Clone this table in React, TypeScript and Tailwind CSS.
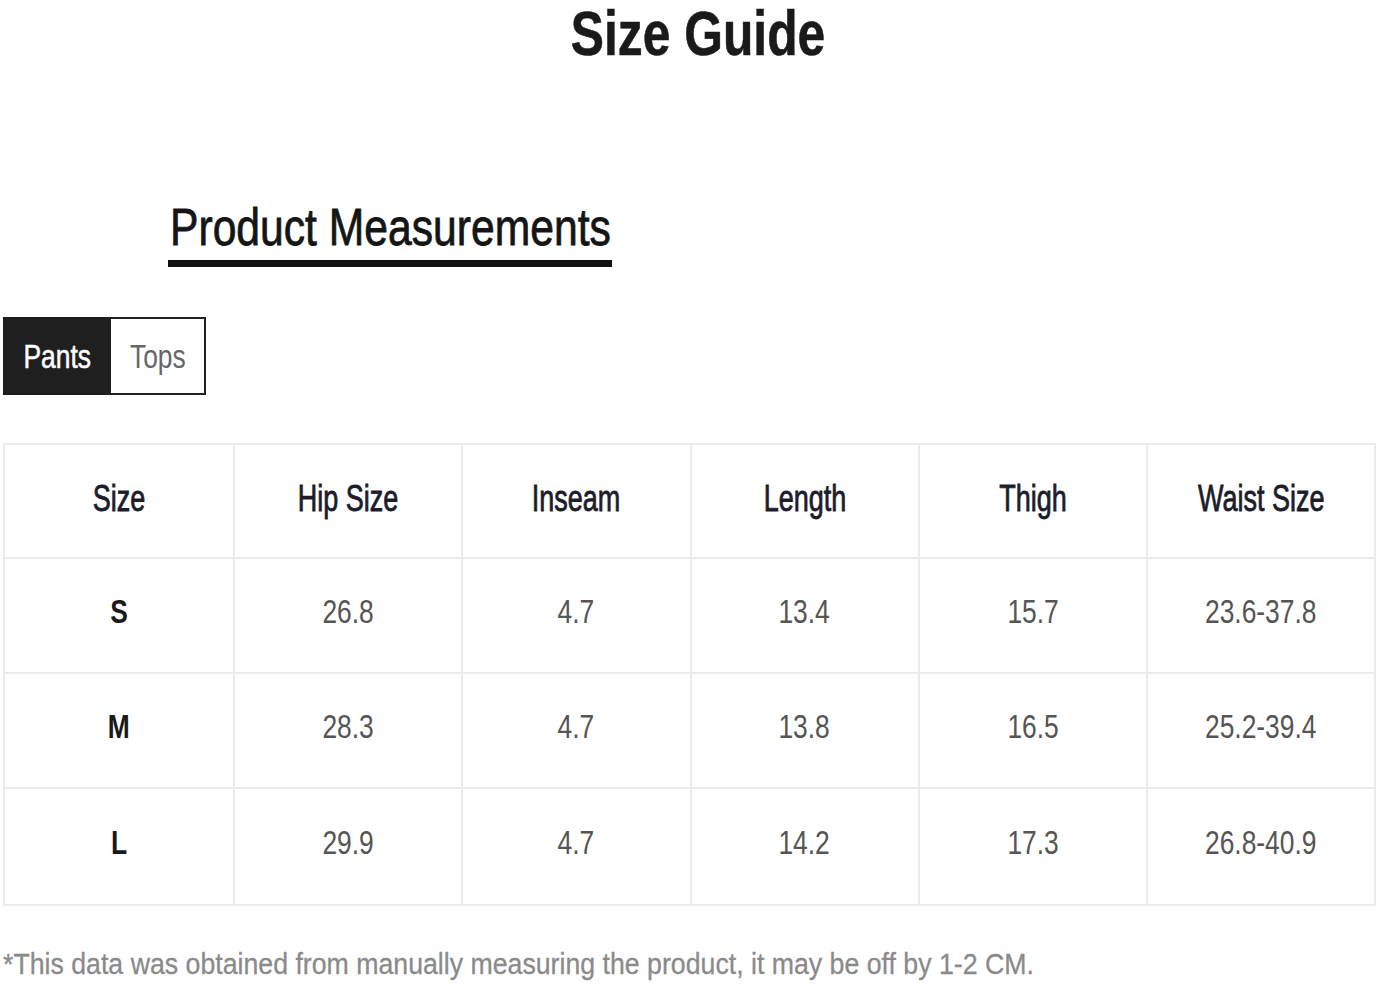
const sizes = [
  { size: "S", hip: "26.8", inseam: "4.7", length: "13.4", thigh: "15.7", waist: "23.6-37.8" },
  { size: "M", hip: "28.3", inseam: "4.7", length: "13.8", thigh: "16.5", waist: "25.2-39.4" },
  { size: "L", hip: "29.9", inseam: "4.7", length: "14.2", thigh: "17.3", waist: "26.8-40.9" },
];

const headers = ["Size", "Hip Size", "Inseam", "Length", "Thigh", "Waist Size"];

export default function App() {
  return (
    <main className="min-h-screen bg-white font-['Liberation_Sans',Arial,sans-serif]">
      {/* title */}
      <h1 className="pt-[2px] pl-[18px] text-center text-[63px] leading-none font-bold text-[#1a1a1a] [-webkit-text-stroke:0.6px_#1a1a1a]">
        <span className="inline-block scale-x-[0.79]">Size Guide</span>
      </h1>

      <div className="mt-[136px] ml-[168px]">
        <h2 className="h-[52px] text-[52px] leading-none whitespace-nowrap text-[#151515] [-webkit-text-stroke:0.8px_#151515]">
          <span className="ml-[2px] inline-block origin-left scale-x-[0.82]">Product Measurements</span>
        </h2>
        <div className="mt-[7px] h-[7px] w-[444px] bg-[#111]" />
      </div>

      {/* tabs */}
      <div className="mt-[50px] ml-[3px] flex h-[78px] w-[203px]">
        <button className="flex w-[108px] items-center justify-center bg-[#1f1f1f] text-[33px] leading-none text-white">
          <span className="inline-block scale-x-[0.8] [-webkit-text-stroke:0.5px_white]">Pants</span>
        </button>
        <button className="flex flex-1 items-center justify-center border-2 border-l-0 border-[#1f1f1f] bg-white text-[33px] leading-none text-[#666]">
          <span className="inline-block scale-x-[0.8]">Tops</span>
        </button>
      </div>

      {/* table */}
      <div className="mx-[3px] mt-[48px] border-2 border-[#ebebeb]">
        <div className="grid grid-cols-6">
          {headers.map((h, i) => (
            <div
              key={h}
              className={`flex h-[114px] items-center justify-center border-b-2 border-[#ebebeb] text-[36px] leading-none text-[#1c1c2a] [-webkit-text-stroke:0.8px_#1c1c2a] ${i > 0 ? "border-l-2" : ""}`}
            >
              <span className="inline-block scale-x-[0.75] pb-[4px]">{h}</span>
            </div>
          ))}
          {sizes.map((row, r) =>
            [row.size, row.hip, row.inseam, row.length, row.thigh, row.waist].map((v, i) => (
              <div
                key={`${r}-${i}`}
                className={`flex h-[115px] items-center justify-center border-[#ebebeb] text-[33px] leading-none ${
                  i > 0 ? "border-l-2" : ""
                } ${r < sizes.length - 1 ? "border-b-2" : ""} ${
                  i === 0 ? "font-bold text-[#1a1a1a]" : "text-[#555]"
                }`}
              >
                <span className="inline-block scale-x-[0.8] pb-[8px]">{v}</span>
              </div>
            ))
          )}
        </div>
      </div>

      <p className="mt-[43px] ml-[3px] text-[30px] leading-none whitespace-nowrap text-[#8a8a8a] [-webkit-text-stroke:0.3px_#8a8a8a]">
        <span className="inline-block origin-left scale-x-[0.89]">
          *This data was obtained from manually measuring the product, it may be off by 1-2 CM.
        </span>
      </p>
    </main>
  );
}
